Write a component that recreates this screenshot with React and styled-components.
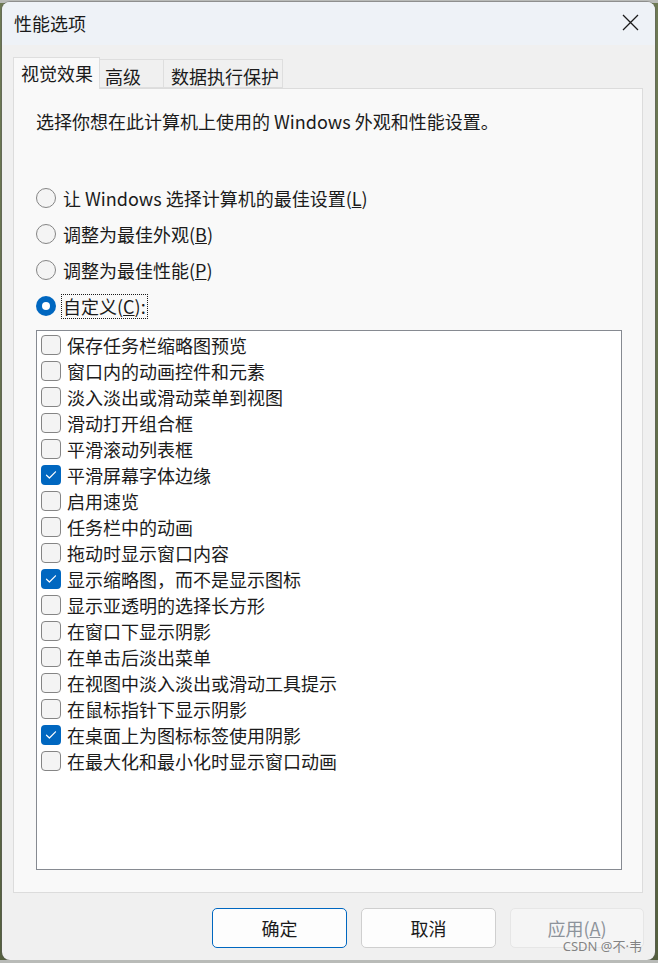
import React from "react";
import styled, { createGlobalStyle } from "styled-components";

const Global = createGlobalStyle`
  html, body { margin: 0; padding: 0; }
  body {
    background: linear-gradient(180deg, #b9bbb8 0px, #b9bbb8 3px, #6e7a55 3px, #55603f 100%);
    font-family: "Noto Sans CJK SC", "Noto Sans", sans-serif;
    color: #1b1b1b;
  }
  * { box-sizing: border-box; }
`;

const Window = styled.div`
  position: relative;
  margin: 2px 0 0 2px;
  width: 653px;
  height: 958px;
  border-radius: 8px;
  background: #f0f0f0;
  overflow: hidden;
  box-shadow: 0 0 0 1px rgba(90, 90, 90, 0.45);
  display: flex;
  flex-direction: column;
`;

const TitleBar = styled.div`
  height: 43px;
  flex: none;
  background: #eef2f7;
  display: flex;
  align-items: center;
  justify-content: space-between;
  padding: 0 16px 0 12px;
`;

const Title = styled.div`
  font-size: 18px;
  line-height: 24px;
  color: #1a1a1a;
  margin-top: -2px;
`;

const CloseBtn = styled.div`
  width: 18px;
  height: 18px;
  display: flex;
  align-items: center;
  justify-content: center;
  margin-top: -2px;
`;

const Body = styled.div`
  flex: 1;
  display: flex;
  flex-direction: column;
  padding: 12px 12px 0 11px;
`;

const TabRow = styled.div`
  display: flex;
  align-items: flex-end;
  height: 31px;
  position: relative;
  z-index: 1;
`;

const Tab = styled.div`
  width: ${(p) => p.$w}px;
  height: ${(p) => (p.$active ? 32 : 29)}px;
  margin-bottom: ${(p) => (p.$active ? -1 : 0)}px;
  padding: ${(p) => (p.$active ? "3px 0 0 7px" : "4px 0 0 " + p.$pl + "px")};
  background: ${(p) => (p.$active ? "#f9f9f9" : "#f0f0f0")};
  border: 1px solid #dedede;
  border-bottom: ${(p) => (p.$active ? "none" : "1px solid #dedede")};
  border-left: ${(p) => (p.$first || p.$active ? "1px solid #dedede" : "none")};
  font-size: 18px;
  line-height: 24px;
  color: #1b1b1b;
  white-space: nowrap;
`;

const Panel = styled.div`
  height: 805px;
  background: #f9f9f9;
  border: 1px solid #dcdcdc;
  padding: 19px 0 0 22px;
  display: flex;
  flex-direction: column;
`;

const Intro = styled.div`
  font-size: 18px;
  line-height: 26px;
  margin-bottom: 46px;
  white-space: nowrap;
`;

const RadioRow = styled.div`
  height: 36px;
  display: flex;
  align-items: center;
`;

const RadioCircle = styled.div`
  width: 20px;
  height: 20px;
  border-radius: 50%;
  flex: none;
  display: flex;
  align-items: center;
  justify-content: center;
  background: ${(p) => (p.$on ? "#0067c0" : "#f4f4f4")};
  border: ${(p) => (p.$on ? "none" : "1px solid #858585")};
  &::after {
    content: "";
    display: ${(p) => (p.$on ? "block" : "none")};
    width: 8px;
    height: 8px;
    border-radius: 50%;
    background: #ffffff;
  }
`;

const RadioLabel = styled.span`
  margin-left: 5px;
  padding: 0 1px;
  font-size: 18px;
  line-height: 23px;
  border: 1px dotted ${(p) => (p.$focus ? "#1a1a1a" : "transparent")};
  white-space: nowrap;
`;

const ListBox = styled.div`
  margin-top: 6px;
  width: 586px;
  height: 540px;
  background: #ffffff;
  border: 1px solid #868a91;
  padding: 1px 0 0 4px;
  display: flex;
  flex-direction: column;
`;

const CheckRow = styled.div`
  height: 26px;
  flex: none;
  display: flex;
  align-items: center;
`;

const Box = styled.div`
  width: 20px;
  height: 20px;
  flex: none;
  border-radius: 4px;
  background: ${(p) => (p.$on ? "#0067c0" : "#f4f4f4")};
  border: ${(p) => (p.$on ? "none" : "1px solid #858585")};
  display: flex;
  align-items: center;
  justify-content: center;
`;

const CheckLabel = styled.span`
  margin-left: 6px;
  font-size: 18px;
  line-height: 24px;
  white-space: nowrap;
`;

const ButtonRow = styled.div`
  display: flex;
  justify-content: flex-end;
  gap: 14px;
  padding-top: 15px;
  margin-right: -1px;
`;

const Button = styled.div`
  width: ${(p) => p.$w || 135}px;
  height: 40px;
  border-radius: 5px;
  display: flex;
  align-items: center;
  justify-content: center;
  font-size: 18px;
  line-height: 24px;
  background: ${(p) => (p.$disabled ? "#f5f5f5" : "#fdfdfd")};
  color: ${(p) => (p.$disabled ? "#8d939b" : "#1b1b1b")};
  border: ${(p) =>
    p.$primary
      ? "1.5px solid #0067c0"
      : p.$disabled
      ? "1px solid #e6e6e6"
      : "1px solid #cfcfcf"};
`;

const Watermark = styled.div`
  position: absolute;
  right: 13px;
  bottom: 6px;
  font-family: "Noto Sans", "Noto Sans CJK SC", sans-serif;
  font-size: 13px;
  line-height: 16px;
  color: rgba(110, 110, 110, 0.85);
  white-space: nowrap;
`;

const items = [
  ["保存任务栏缩略图预览", false],
  ["窗口内的动画控件和元素", false],
  ["淡入淡出或滑动菜单到视图", false],
  ["滑动打开组合框", false],
  ["平滑滚动列表框", false],
  ["平滑屏幕字体边缘", true],
  ["启用速览", false],
  ["任务栏中的动画", false],
  ["拖动时显示窗口内容", false],
  ["显示缩略图，而不是显示图标", true],
  ["显示亚透明的选择长方形", false],
  ["在窗口下显示阴影", false],
  ["在单击后淡出菜单", false],
  ["在视图中淡入淡出或滑动工具提示", false],
  ["在鼠标指针下显示阴影", false],
  ["在桌面上为图标标签使用阴影", true],
  ["在最大化和最小化时显示窗口动画", false],
];

const radios = [
  [<>让 Windows 选择计算机的最佳设置(<u>L</u>)</>, false],
  [<>调整为最佳外观(<u>B</u>)</>, false],
  [<>调整为最佳性能(<u>P</u>)</>, false],
  [<>自定义(<u>C</u>):</>, true],
];

const Check = () => (
  <svg width="12" height="10" viewBox="0 0 12 10">
    <path d="M1.5 5.2 L4.4 8 L10.5 1.8" fill="none" stroke="#fff" strokeWidth="1.2" strokeLinecap="round" strokeLinejoin="round" />
  </svg>
);

export default function App() {
  return (
    <>
      <Global />
      <Window>
        <TitleBar>
          <Title>性能选项</Title>
          <CloseBtn>
            <svg width="17" height="17" viewBox="0 0 17 17">
              <path d="M1 1 L16 16 M16 1 L1 16" stroke="#1a1a1a" strokeWidth="1.3" fill="none" />
            </svg>
          </CloseBtn>
        </TitleBar>
        <Body>
          <TabRow>
            <Tab $active $w={87}>视觉效果</Tab>
            <Tab $w={64} $pl={5}>高级</Tab>
            <Tab $w={119} $pl={7}>数据执行保护</Tab>
          </TabRow>
          <Panel>
            <Intro>选择你想在此计算机上使用的 Windows 外观和性能设置。</Intro>
            {radios.map(([label, on], i) => (
              <RadioRow key={i}>
                <RadioCircle $on={on} />
                <RadioLabel $focus={on}>{label}</RadioLabel>
              </RadioRow>
            ))}
            <ListBox>
              {items.map(([label, on]) => (
                <CheckRow key={label}>
                  <Box $on={on}>{on && <Check />}</Box>
                  <CheckLabel>{label}</CheckLabel>
                </CheckRow>
              ))}
            </ListBox>
          </Panel>
          <ButtonRow>
            <Button $primary>确定</Button>
            <Button>取消</Button>
            <Button $disabled $w={134}>应用(<u>A</u>)</Button>
          </ButtonRow>
        </Body>
        <Watermark>CSDN @不·韦</Watermark>
      </Window>
    </>
  );
}
